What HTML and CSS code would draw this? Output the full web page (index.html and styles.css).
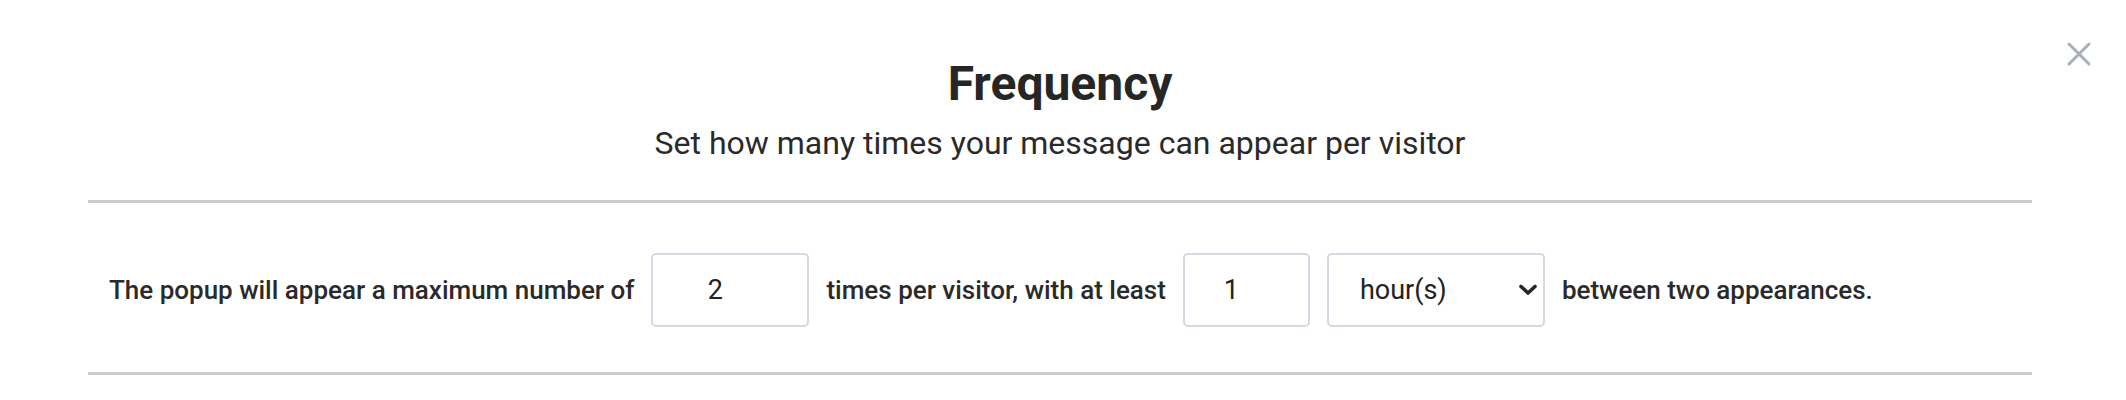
FILE: index.html
```html
<!DOCTYPE html>
<html lang="en">
<head>
    <meta charset="UTF-8">
    <title>Frequency</title>
    <link rel="stylesheet" href="styles.css">
</head>
<body>
<div class="modal">
    <button class="close" type="button" aria-label="Close">
        <svg width="24" height="24" viewBox="0 0 24 24">
            <path d="M2 2L22 22M22 2L2 22" stroke="#a9aebf" stroke-width="3" stroke-linecap="round"/>
        </svg>
    </button>
    <div class="con">
        <div class="head">
            <h1>Frequency</h1>
            <p>Set how many times your message can appear per visitor</p>
        </div>
        <div class="row">
            <span>The popup will appear a maximum number of</span>
            <input class="field times" type="text" value="2">
            <span>times per visitor, with at least</span>
            <input class="field delay" type="text" value="1">
            <span class="select-wrap">
                <select class="unit">
                    <option value="hour">hour(s)</option>
                    <option value="day">day(s)</option>
                    <option value="minute">minute(s)</option>
                </select>
                <svg class="arrow" width="20" height="12" viewBox="0 0 20 12">
                    <path d="M3 2.5L10 9L17 2.5" fill="none" stroke="#262626" stroke-width="3.6" stroke-linecap="round" stroke-linejoin="round"/>
                </svg>
            </span>
            <span>between two appearances.</span>
        </div>
    </div>
</div>
</body>
</html>
```

FILE: styles.css
```css
*{
    margin:0;
    padding:0;
    box-sizing:border-box;
}
body{
    font-family:Roboto, "Liberation Sans", sans-serif;
    color:#2a2a2a;
    background:#fff;
}
.modal{
    position:relative;
    padding-top:56px;
}
.close{
    position:absolute;
    top:42px;
    left:2067px;
    border:none;
    background:none;
    width:24px;
    height:24px;
    cursor:pointer;
}
.close svg{
    display:block;
}
.con{
    width:1944px;
    margin-left:88px;
}
.head{
    text-align:center;
    padding-bottom:38px;
    border-bottom:3px solid #cbcbcb;
}
.head h1{
    font-size:48px;
    line-height:56px;
    font-weight:700;
    color:#262626;
}
.head p{
    margin-top:13px;
    font-size:32px;
    line-height:37px;
    color:#2a2a2a;
}
.row{
    display:flex;
    align-items:center;
    gap:17px;
    padding:50px 0 45px 21px;
    border-bottom:3px solid #cbcbcb;
    font-size:26px;
    font-weight:500;
    color:#2a2a2a;
}
.field{
    height:74px;
    border:2px solid #d6d9e3;
    border-radius:5px;
    font-family:inherit;
    font-size:27px;
    color:#222;
    text-align:center;
    padding:0 30px 0 0;
    outline:none;
}
.times{
    width:158px;
}
.delay{
    width:127px;
}
.select-wrap{
    position:relative;
    display:block;
}
.unit{
    display:block;
    width:218px;
    height:74px;
    border:2px solid #d6d9e3;
    border-radius:5px;
    background:#fff;
    font-family:inherit;
    font-size:27px;
    color:#222;
    padding-left:31px;
    appearance:none;
    -webkit-appearance:none;
    outline:none;
}
.arrow{
    position:absolute;
    right:7px;
    top:31px;
    pointer-events:none;
}
```
